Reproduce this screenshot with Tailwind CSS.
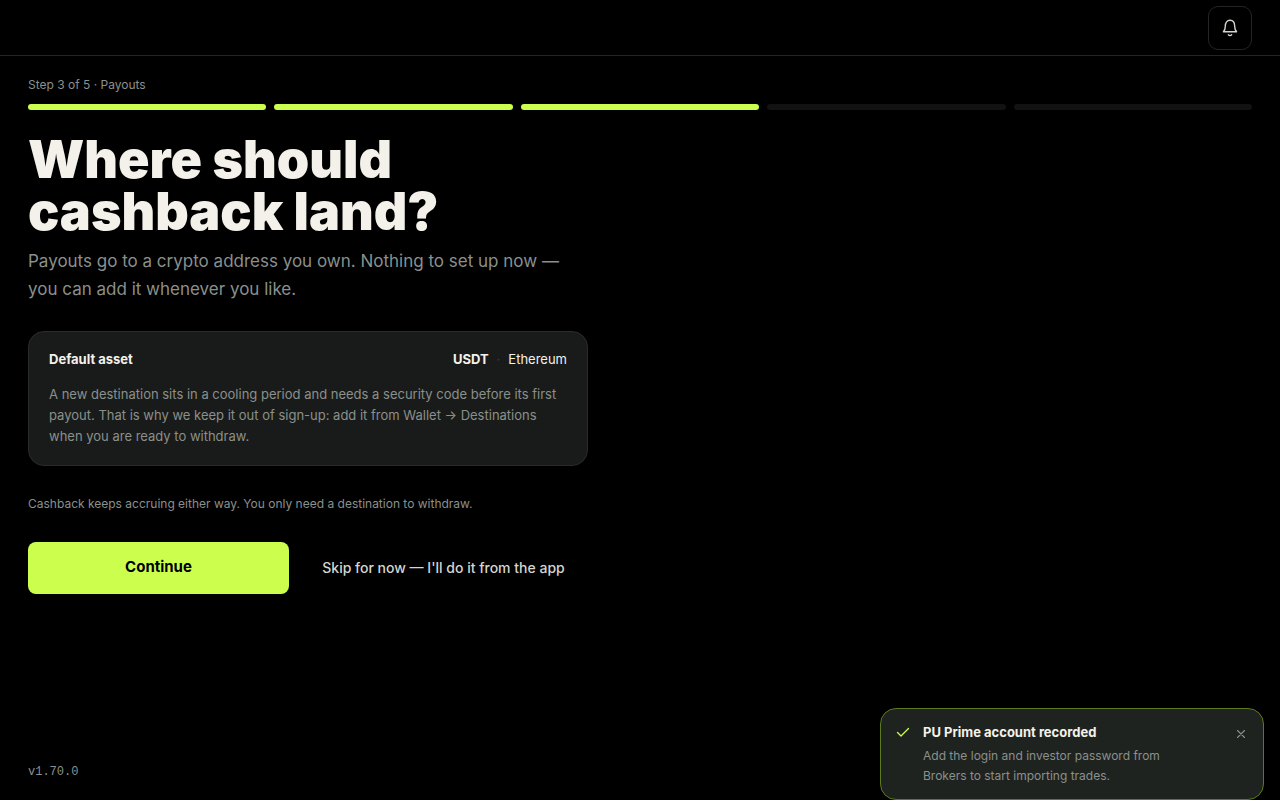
<!DOCTYPE html>
<html lang="en">
<head>
  <meta charset="UTF-8" />
  <meta name="viewport" content="width=device-width, initial-scale=1.0" />
  <title>Payouts</title>
  <script src="https://cdn.jsdelivr.net/npm/@tailwindcss/browser@4"></script>
</head>

<body class="flex min-h-screen flex-col bg-black font-['Inter',sans-serif] text-[#f4f1ea]">
  <!-- Header -->
  <header class="flex h-14 items-center justify-end border-b border-[#232524] px-7">
    <button type="button" aria-label="Notifications" class="flex size-11 items-center justify-center rounded-[10px] border border-[#232524] text-[#d6d5ce]">
      <svg class="size-5" viewBox="0 0 20 20" fill="none" stroke="currentColor" stroke-width="1.4" stroke-linecap="round" stroke-linejoin="round">
        <path d="M3.400 13.800c1.300-1.300 1.900-2.700 1.900-5.600C5.300 4.700 7.200 2.300 10 2.300s4.700 2.400 4.700 5.900c0 2.900.6 4.300 1.900 5.600z" />
        <path d="M8.400 16.800c.4.500.9.800 1.600.8s1.200-.3 1.600-.8" />
      </svg>
    </button>
  </header>

  <main class="flex-1 px-7 pt-5">
    <!-- Progress -->
    <p id="step" class="text-xs leading-[18px] text-[#8a908c]">Step 3 of 5 · Payouts</p>
    <div class="mt-2.5 grid grid-cols-5 gap-2" role="progressbar" aria-labelledby="step" aria-valuemin="0" aria-valuemax="5" aria-valuenow="3">
      <span class="h-1.5 rounded-full bg-[#ccff4d]"></span>
      <span class="h-1.5 rounded-full bg-[#ccff4d]"></span>
      <span class="h-1.5 rounded-full bg-[#ccff4d]"></span>
      <span class="h-1.5 rounded-full bg-[#111211]"></span>
      <span class="h-1.5 rounded-full bg-[#111211]"></span>
    </div>

    <div class="max-w-[560px] pt-6">
      <h1 class="text-[52px] leading-[52px] font-black">Where should<br />cashback land?</h1>
      <p class="mt-[9px] text-[17px] leading-7 text-[#8a908c]">Payouts go to a crypto address you own. Nothing to set up now — you can add it whenever you like.</p>

      <!-- Default asset -->
      <section class="mt-7 rounded-2xl border border-[#2a2c2b] bg-[#191b1a] px-5 pt-[17px] pb-[18px] text-[13px] leading-[21px]">
        <div class="flex items-center justify-between">
          <h2 class="font-bold">Default asset</h2>
          <p class="flex gap-2">
            <strong class="font-bold">USDT</strong>
            <span class="text-[#3a3d3b]">·</span>
            <span>Ethereum</span>
          </p>
        </div>
        <p class="mt-3.5 text-[#8a908c]">A new destination sits in a cooling period and needs a security code before its first payout. That is why we keep it out of sign-up: add it from Wallet → Destinations when you are ready to withdraw.</p>
      </section>

      <p class="mt-7 text-xs leading-5 text-[#8a908c]">Cashback keeps accruing either way. You only need a destination to withdraw.</p>

      <!-- Actions -->
      <div class="mt-7 flex gap-2.5">
        <button type="button" class="h-[52px] flex-1 rounded-lg bg-[#ccff4d] pb-0.5 text-[15px] font-bold text-black">Continue</button>
        <button type="button" class="h-[52px] w-[289px] text-sm font-medium text-[#d6d5ce]">Skip for now — I'll do it from the app</button>
      </div>
    </div>
  </main>

  <footer class="px-7 pb-5 font-['Liberation_Mono',monospace] text-xs leading-4 text-[#8a908c]">v1.70.0</footer>

  <!-- Toast -->
  <div role="status" class="fixed right-4 bottom-0 flex w-96 items-start gap-3 rounded-2xl border border-[#5c7a1c] bg-[#1f2320] pt-[13px] pr-2.5 pb-[13px] pl-3.5">
    <svg class="mt-0.5 size-4 shrink-0 text-[#ccff4d]" viewBox="0 0 16 16" fill="none" stroke="currentColor" stroke-width="1.3" stroke-linecap="round" stroke-linejoin="round">
      <path d="M2.500 8.500l3.500 3.500 7.500-7.500" />
    </svg>
    <div class="flex-1">
      <p class="text-[13px] leading-5 font-bold">PU Prime account recorded</p>
      <p class="mt-1 max-w-[270px] text-xs leading-5 text-[#8a908c]">Add the login and investor password from Brokers to start importing trades.</p>
    </div>
    <button type="button" aria-label="Dismiss" class="flex size-6 items-center justify-center text-[#8a908c]">
      <svg class="size-3.5" viewBox="0 0 16 16" fill="none" stroke="currentColor" stroke-width="1.3" stroke-linecap="round">
        <path d="M4 4l8 8M12 4l-8 8" />
      </svg>
    </button>
  </div>
</body>
</html>
